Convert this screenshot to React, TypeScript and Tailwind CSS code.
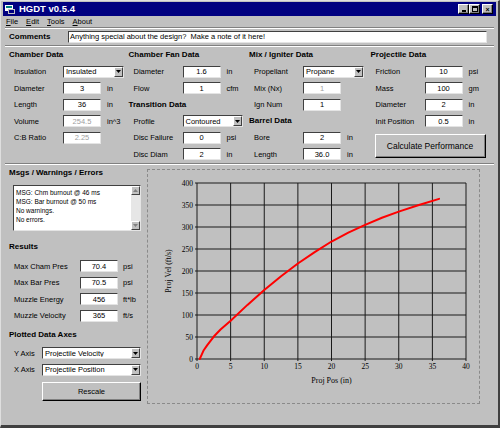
import React from 'react';

const CURVE: [number, number][] = [
  [0.4, 0], [0.7, 10], [1, 20], [1.5, 31], [2.5, 51], [3.5, 67], [5, 87], [7.5, 123], [10, 157],
  [12.5, 188], [15, 217], [17.5, 243], [20, 267], [22.5, 287], [25, 305], [27.5, 321],
  [30, 335], [33, 350], [36, 364],
];

function Field({ value, disabled }: { value: string; disabled?: boolean }) {
  return (
    <div
      className={`flex h-[12px] w-[38px] items-center justify-center border border-t-[#404040] border-l-[#404040] border-r-[#e4e4e4] border-b-[#e4e4e4] bg-white text-[7.5px] leading-none ${
        disabled ? 'text-[#a0a0a0]' : 'text-black'
      }`}
    >
      {value}
    </div>
  );
}

function Select({ value, width }: { value: string; width: string }) {
  return (
    <div
      className={`flex h-[12px] items-center border border-t-[#404040] border-l-[#404040] border-r-[#e4e4e4] border-b-[#e4e4e4] bg-white ${width}`}
    >
      <span className="flex-1 truncate pl-[2px] text-[7.5px] leading-none">{value}</span>
      <div className="flex h-full w-[9px] items-center justify-center border border-t-white border-l-white border-r-[#404040] border-b-[#404040] bg-[#c0c0c0]">
        <svg width="5" height="3" viewBox="0 0 5 3">
          <path d="M0 0h5L2.5 3z" fill="#000" />
        </svg>
      </div>
    </div>
  );
}

function Header({ children }: { children: React.ReactNode }) {
  return <div className="flex h-[16.5px] items-center text-[8px] font-bold leading-none">{children}</div>;
}

function Row({
  label,
  unit,
  children,
}: {
  label: string;
  unit?: string;
  children: React.ReactNode;
}) {
  return (
    <div className="flex h-[16.5px] items-center">
      <span className="w-[54px] shrink-0 pl-[5px] text-[7.5px] leading-none">{label}</span>
      {children}
      {unit && <span className="ml-[6px] text-[7.5px] leading-none">{unit}</span>}
    </div>
  );
}

function ResultRow({ label, value, unit }: { label: string; value: string; unit: string }) {
  return (
    <div className="flex h-[16.5px] items-center">
      <span className="w-[71px] shrink-0 pl-[5px] text-[7.5px] leading-none">{label}</span>
      <Field value={value} />
      <span className="ml-[5px] text-[7.5px] leading-none">{unit}</span>
    </div>
  );
}

function Groove() {
  return <div className="mx-[4px] h-[2px] border-t border-t-[#808080] border-b border-b-white" />;
}

function Chart() {
  const PX0 = 49;
  const PX1 = 318;
  const PY0 = 13;
  const PY1 = 189;
  const sx = (x: number) => PX0 + (x / 40) * (PX1 - PX0);
  const sy = (v: number) => PY1 - (v / 400) * (PY1 - PY0);
  const ticks = [0, 1, 2, 3, 4, 5, 6, 7, 8];
  const serif = "'Liberation Serif', 'Times New Roman', serif";

  return (
    <svg width="331" height="233" viewBox="0 0 331 233">
      {ticks.map((i) => (
        <line key={`v${i}`} x1={sx(i * 5)} x2={sx(i * 5)} y1={PY0} y2={PY1 + 2} stroke="#1a1a1a" strokeWidth="1" />
      ))}
      {ticks.map((i) => (
        <line key={`h${i}`} x1={PX0 - 2} x2={PX1} y1={sy(i * 50)} y2={sy(i * 50)} stroke="#1a1a1a" strokeWidth="1" />
      ))}
      {ticks.map((i) => (
        <text key={`yl${i}`} x={PX0 - 4} y={sy(i * 50) + 2.5} textAnchor="end" fontSize="7.5" fontFamily={serif} fill="#000">
          {i * 50}
        </text>
      ))}
      {ticks.map((i) => (
        <text key={`xl${i}`} x={sx(i * 5)} y={PY1 + 10} textAnchor="middle" fontSize="7.5" fontFamily={serif} fill="#000">
          {i * 5}
        </text>
      ))}
      <text x={(PX0 + PX1) / 2} y={PY1 + 24} textAnchor="middle" fontSize="8" fontFamily={serif} fill="#000">
        Proj Pos (in)
      </text>
      <text
        x={0}
        y={0}
        transform={`translate(23 ${(PY0 + PY1) / 2}) rotate(-90)`}
        textAnchor="middle"
        fontSize="8"
        fontFamily={serif}
        fill="#000"
      >
        Proj Vel (ft/s)
      </text>
      <polyline
        points={CURVE.map(([x, v]) => `${sx(x)},${sy(v)}`).join(' ')}
        fill="none"
        stroke="#ff0000"
        strokeWidth="2"
        strokeLinejoin="round"
        strokeLinecap="round"
      />
    </svg>
  );
}

function TitleButton({ children }: { children: React.ReactNode }) {
  return (
    <div className="flex h-[10px] w-[11px] items-center justify-center border border-t-white border-l-white border-r-[#000] border-b-[#000] bg-[#c0c0c0] shadow-[inset_-1px_-1px_0_#808080]">
      {children}
    </div>
  );
}

function MenuItem({ first, rest }: { first: string; rest: string }) {
  return (
    <span className="text-[7.5px] leading-none">
      <span className="underline">{first}</span>
      {rest}
    </span>
  );
}

export default function App() {
  return (
    <div className="relative h-[428px] w-[500px] overflow-hidden border-t border-l border-r-2 border-b-[3px] border-t-[#dfdfdf] border-l-[#dfdfdf] border-r-[#404040] border-b-[#404040] bg-[#c0c0c0] font-['Liberation_Sans',Arial,sans-serif] text-black">
      {/* title bar */}
      <div className="mx-[2px] mt-[1px] flex h-[14px] items-center bg-[#000080] pl-[2px] pr-[3px]">
        <svg width="10" height="9" viewBox="0 0 10 9">
          <rect x="0" y="0" width="8" height="6" fill="#fff" />
          <rect x="1" y="1" width="6" height="2" fill="#008080" />
          <rect x="3" y="4" width="7" height="5" fill="#c0c0c0" />
          <rect x="4" y="5" width="5" height="3" fill="#000080" />
        </svg>
        <span className="ml-[4px] text-[9.5px] font-bold leading-none text-white">HGDT v0.5.4</span>
        <div className="ml-auto flex items-center">
          <TitleButton>
            <div className="mt-[4px] h-[1.5px] w-[4px] bg-black" />
          </TitleButton>
          <TitleButton>
            <div className="h-[6px] w-[6px] border border-t-2 border-black" />
          </TitleButton>
          <div className="ml-[2px]">
            <TitleButton>
              <span className="text-[7px] font-bold leading-none">×</span>
            </TitleButton>
          </div>
        </div>
      </div>

      {/* menu */}
      <div className="flex h-[11px] items-center gap-[8px] pl-[5px]">
        <MenuItem first="F" rest="ile" />
        <MenuItem first="E" rest="dit" />
        <MenuItem first="T" rest="ools" />
        <MenuItem first="A" rest="bout" />
      </div>
      <Groove />

      {/* comments */}
      <div className="flex h-[16px] items-center pl-[8px]">
        <span className="w-[59px] text-[8px] font-bold leading-none">Comments</span>
        <div className="flex h-[12px] w-[419px] items-center border border-t-[#404040] border-l-[#404040] border-r-[#e4e4e4] border-b-[#e4e4e4] bg-white pl-[1px] text-[7.5px] leading-none">
          Anything special about the design?&nbsp; Make a note of it here!
        </div>
      </div>
      <Groove />

      {/* inputs */}
      <div className="flex h-[116px] pl-[8px]">
        <div className="w-[120px]">
          <Header>Chamber Data</Header>
          <Row label="Insulation">
            <Select value="Insulated" width="w-[61px]" />
          </Row>
          <Row label="Diameter" unit="in">
            <Field value="3" />
          </Row>
          <Row label="Length" unit="in">
            <Field value="36" />
          </Row>
          <Row label="Volume" unit="in^3">
            <Field value="254.5" disabled />
          </Row>
          <Row label="C:B Ratio">
            <Field value="2.25" disabled />
          </Row>
        </div>
        <div className="w-[121px]">
          <Header>Chamber Fan Data</Header>
          <Row label="Diameter" unit="in">
            <Field value="1.6" />
          </Row>
          <Row label="Flow" unit="cfm">
            <Field value="1" />
          </Row>
          <Header>Transition Data</Header>
          <Row label="Profile">
            <Select value="Contoured" width="w-[60px]" />
          </Row>
          <Row label="Disc Failure" unit="psi">
            <Field value="0" />
          </Row>
          <Row label="Disc Diam" unit="in">
            <Field value="2" />
          </Row>
        </div>
        <div className="w-[122px]">
          <Header>Mix / Igniter Data</Header>
          <Row label="Propellant">
            <Select value="Propane" width="w-[61px]" />
          </Row>
          <Row label="Mix (Nx)">
            <Field value="1" disabled />
          </Row>
          <Row label="Ign Num">
            <Field value="1" />
          </Row>
          <Header>Barrel Data</Header>
          <Row label="Bore" unit="in">
            <Field value="2" />
          </Row>
          <Row label="Length" unit="in">
            <Field value="36.0" />
          </Row>
        </div>
        <div className="w-[128px]">
          <Header>Projectile Data</Header>
          <Row label="Friction" unit="psi">
            <Field value="10" />
          </Row>
          <Row label="Mass" unit="gm">
            <Field value="100" />
          </Row>
          <Row label="Diameter" unit="in">
            <Field value="2" />
          </Row>
          <Row label="Init Position" unit="in">
            <Field value="0.5" />
          </Row>
          <div className="ml-[4px] mt-[4.5px] flex h-[24px] w-[111px] items-center justify-center border border-t-white border-l-white border-r-black border-b-black text-[8.5px] leading-none shadow-[inset_-1px_-1px_0_#808080]">
            Calculate Performance
          </div>
        </div>
      </div>
      <Groove />

      {/* lower area */}
      <div className="flex">
        <div className="w-[146px] pl-[8px]">
          <div className="flex h-[16px] items-center text-[8px] font-bold leading-none">Msgs / Warnings / Errors</div>
          <div className="ml-[4px] mt-[4px] flex h-[46px] w-[128px] border border-t-[#404040] border-l-[#404040] border-r-[#e4e4e4] border-b-[#e4e4e4] bg-white">
            <div className="flex-1 pl-[2px] pt-[2px] text-[6.5px] leading-[9px]">
              <div>MSG: Chm burnout @ 46 ms</div>
              <div>MSG: Bar burnout @ 50 ms</div>
              <div>No warnings.</div>
              <div>No errors.</div>
            </div>
            <div className="flex w-[9px] flex-col bg-[#e6e6e6]">
              <div className="flex h-[9px] items-center justify-center border border-t-white border-l-white border-r-[#404040] border-b-[#404040] bg-[#c0c0c0]">
                <svg width="5" height="3" viewBox="0 0 5 3">
                  <path d="M0 3h5L2.5 0z" fill="#808080" />
                </svg>
              </div>
              <div className="flex-1" />
              <div className="flex h-[9px] items-center justify-center border border-t-white border-l-white border-r-[#404040] border-b-[#404040] bg-[#c0c0c0]">
                <svg width="5" height="3" viewBox="0 0 5 3">
                  <path d="M0 0h5L2.5 3z" fill="#808080" />
                </svg>
              </div>
            </div>
          </div>
          <div className="mt-[8px] flex h-[16px] items-center text-[8px] font-bold leading-none">Results</div>
          <div className="mt-[3px]">
            <ResultRow label="Max Cham Pres" value="70.4" unit="psi" />
            <ResultRow label="Max Bar Pres" value="70.5" unit="psi" />
            <ResultRow label="Muzzle Energy" value="456" unit="ft*lb" />
            <ResultRow label="Muzzle Velocity" value="365" unit="ft/s" />
          </div>
          <div className="mt-[3px] flex h-[16px] items-center text-[8px] font-bold leading-none">Plotted Data Axes</div>
          <div className="mt-[2px]">
            <div className="flex h-[16.5px] items-center">
              <span className="w-[33px] shrink-0 pl-[5px] text-[7.5px] leading-none">Y Axis</span>
              <Select value="Projectile Velocity" width="w-[99px]" />
            </div>
            <div className="flex h-[16.5px] items-center">
              <span className="w-[33px] shrink-0 pl-[5px] text-[7.5px] leading-none">X Axis</span>
              <Select value="Projectile Position" width="w-[99px]" />
            </div>
          </div>
          <div className="ml-[33px] mt-[4px] flex h-[19px] w-[99px] items-center justify-center border border-t-white border-l-white border-r-black border-b-black text-[7.5px] leading-none shadow-[inset_-1px_-1px_0_#808080]">
            Rescale
          </div>
        </div>
        <div className="mt-[4px] h-[235px] w-[333px] border border-dashed border-[#8a8a8a]">
          <Chart />
        </div>
      </div>
    </div>
  );
}
